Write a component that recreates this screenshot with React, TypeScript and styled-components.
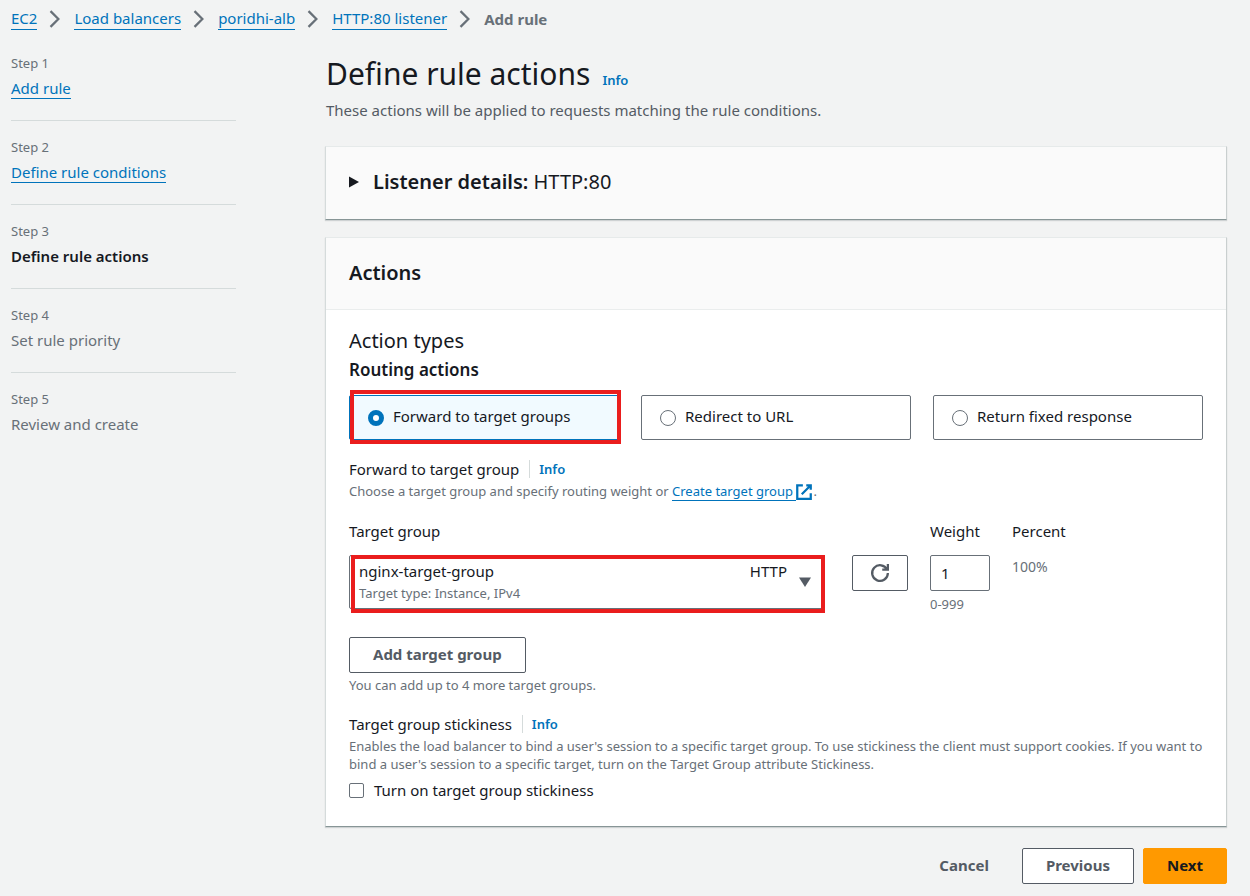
import React from "react";
import styled, { createGlobalStyle, css } from "styled-components";

const color = {
  page: "#f2f3f3",
  text: "#16191f",
  muted: "#687078",
  secondary: "#545b64",
  link: "#0073bb",
  line: "#d5dbdb",
  mark: "#ea1d1d",
};

const GlobalStyle = createGlobalStyle`
  *, *::before, *::after { box-sizing: border-box; }
  body {
    margin: 0;
    background: ${color.page};
    color: ${color.text};
    font-family: "Noto Sans", "Open Sans", sans-serif;
    font-size: 15px;
    line-height: 22px;
  }
  h1, h2, h3, p, ol { margin: 0; padding: 0; font-weight: 400; }
  ol { list-style: none; }
  button, input, select { font: inherit; color: inherit; margin: 0; }
`;

const Page = styled.div`
  padding: 7px 23px 12px 11px;
`;

const Crumbs = styled.ol`
  display: flex;
  align-items: center;
  color: ${color.muted};
`;

const Crumb = styled.li`
  display: flex;
  align-items: center;
  font-weight: ${(p: { $current?: boolean }) => (p.$current ? 700 : 400)};
`;

const Link = styled.a`
  color: ${color.link};
  text-decoration: none;
  border-bottom: 1px solid ${color.link};
`;

const ChevronIcon = styled.svg`
  width: 18px;
  height: 18px;
  margin: 0 10px 0 9px;
  fill: none;
  stroke: ${color.muted};
  stroke-width: 2;
`;

const Columns = styled.div`
  display: grid;
  grid-template-columns: 225px minmax(0, 1fr);
  column-gap: 89px;
  margin-top: 24px;
`;

const Step = styled.li`
  padding-bottom: 21px;
  & + & {
    border-top: 1px solid ${color.line};
    padding-top: 17px;
  }
`;

const StepNumber = styled.div`
  margin-bottom: 5px;
  color: ${color.muted};
  font-size: 13px;
  line-height: 18px;
`;

const StepTitle = styled.div<{ $current?: boolean }>`
  color: ${(p) => (p.$current ? color.text : color.muted)};
  font-weight: ${(p) => (p.$current ? 600 : 400)};
`;

const Title = styled.h1`
  font-size: 30px;
  line-height: 40px;
`;

const Heading = styled.header`
  padding-left: 1px;
`;

const TitleRow = styled.div`
  display: flex;
  align-items: baseline;
  gap: 12px;
`;

const InfoLink = styled.a<{ $divided?: boolean }>`
  color: ${color.link};
  font-size: 13px;
  font-weight: 600;
  line-height: 18px;
  text-decoration: none;
  ${(p) =>
    p.$divided &&
    css`
      border-left: 1px solid ${color.line};
      margin-left: 10px;
      padding-left: 9px;
    `}
`;

const Lead = styled.p`
  margin-top: 5px;
  color: ${color.secondary};
`;

const Panel = styled.section`
  background: #fff;
  border: 1px solid #e6eaea;
  border-left-color: ${color.line};
  border-right-color: #c9cfcf;
  border-bottom-color: #879596;
  box-shadow: 0 1px 1px rgba(0, 28, 36, 0.15);
`;

const ListenerPanel = styled(Panel)`
  margin-top: 25px;
  background: #fafafa;
`;

const Toggle = styled.button`
  display: flex;
  align-items: center;
  width: 100%;
  padding: 21px 23px 24px;
  border: 0;
  background: none;
  font-size: 20px;
  line-height: 27px;
  text-align: left;
  white-space: pre;
`;

const ToggleIcon = styled.svg`
  width: 10px;
  height: 12px;
  margin-right: 14px;
  fill: ${color.text};
`;

const Strong = styled.span`
  font-weight: 600;
`;

const ActionsPanel = styled(Panel)`
  margin-top: 17px;
`;

const PanelHeader = styled.h2`
  padding: 21px 23px 23px;
  background: #fafafa;
  border-bottom: 1px solid #eaeded;
  font-size: 20px;
  font-weight: 600;
  line-height: 27px;
`;

const PanelBody = styled.div`
  padding: 17px 23px 25px;
`;

const GroupTitle = styled.h3`
  font-size: 20px;
  line-height: 28px;
`;

const GroupSubtitle = styled.h3`
  margin-top: 1px;
  font-size: 17px;
  font-weight: 600;
  line-height: 28px;
`;

const marked = css`
  position: relative;
  &::after {
    content: "";
    position: absolute;
    border: 4px solid ${color.mark};
    pointer-events: none;
  }
`;

const Tiles = styled.div`
  display: grid;
  grid-template-columns: repeat(3, 1fr);
  column-gap: 22px;
  margin-top: 11px;
`;

const Tile = styled.label<{ $selected?: boolean }>`
  display: flex;
  align-items: center;
  height: 45px;
  padding: 0 18px;
  border: 1px solid ${(p) => (p.$selected ? color.link : color.muted)};
  border-radius: 2px;
  background: ${(p) => (p.$selected ? "#f1faff" : "#fff")};
  ${(p) =>
    p.$selected &&
    css`
      ${marked}
      &::after {
        inset: -6px -3px -5px 0;
      }
    `}
`;

const TileText = styled.span`
  padding-bottom: 3px;
`;

const Radio = styled.input`
  appearance: none;
  width: 16px;
  height: 16px;
  margin: 0 9px 0 0;
  border: 1px solid ${color.muted};
  border-radius: 50%;
  background: #fff;
  &:checked {
    border: 5px solid ${color.link};
  }
`;

const FieldTitle = styled.div`
  display: flex;
  align-items: center;
  margin-bottom: 2px;
`;

const Hint = styled.p`
  margin-right: -4px;
  color: ${color.muted};
  font-size: 13px;
  line-height: 18px;
`;

const Field = styled.div`
  margin-top: 18px;
`;

const ExternalIcon = styled.svg`
  width: 18px;
  height: 18px;
  margin: -2px 0 -2px -1px;
  vertical-align: -3px;
  fill: none;
  stroke: ${color.link};
  stroke-width: 2;
`;

const TargetRow = styled.div`
  display: flex;
  gap: 22px;
  margin-top: 20px;
`;

const TargetColumn = styled.div`
  flex: 0 1 475px;
  margin-right: 6px;
`;

const Label = styled.label`
  display: block;
  margin-bottom: 13px;
`;

const SelectBox = styled.div`
  ${marked}
  display: grid;
  &::after {
    inset: 0 -1px -4px 2px;
  }
`;

const Select = styled.select`
  grid-area: 1 / 1;
  appearance: none;
  width: 100%;
  height: 54px;
  padding: 0 80px 22px 9px;
  border: 1px solid ${color.muted};
  border-radius: 2px;
  background: #fff;
`;

const SelectDetails = styled.div`
  grid-area: 1 / 1;
  display: grid;
  grid-template-columns: 1fr auto 12px;
  column-gap: 12px;
  align-items: center;
  padding: 5px 13px 6px 10px;
  pointer-events: none;
`;

const Protocol = styled.span`
  grid-area: 1 / 2;
`;

const TargetType = styled.span`
  grid-area: 2 / 1;
  color: ${color.muted};
  font-size: 13px;
  line-height: 20px;
`;

const CaretIcon = styled.svg`
  grid-area: 1 / 3 / 3 / 4;
  width: 12px;
  height: 10px;
  fill: ${color.secondary};
`;

const Button = styled.button<{ $kind?: "primary" | "link" }>`
  height: 36px;
  padding: 0 23px 2px;
  border: 1px solid ${color.secondary};
  border-radius: 2px;
  background: #fff;
  color: ${color.secondary};
  font-weight: 700;
  ${(p) =>
    p.$kind === "primary" &&
    css`
      border-color: #ff9900;
      background: #ff9900;
      color: ${color.text};
    `}
  ${(p) =>
    p.$kind === "link" &&
    css`
      border-color: transparent;
      background: none;
    `}
`;

const RefreshButton = styled(Button)`
  display: flex;
  align-items: center;
  justify-content: center;
  width: 56px;
  margin-top: 35px;
  padding: 0;
`;

const RefreshIcon = styled.svg`
  width: 18px;
  height: 18px;
  fill: none;
  stroke: ${color.secondary};
  stroke-width: 2;
  overflow: visible;
`;

const NumberInput = styled.input`
  display: block;
  width: 60px;
  height: 36px;
  margin-bottom: 4px;
  padding: 0 10px;
  border: 1px solid ${color.muted};
  border-radius: 2px;
  background: #fff;
`;

const WeightColumn = styled.div`
  width: 60px;
`;

const Percent = styled.output`
  color: ${color.muted};
  font-size: 14px;
`;

const AddArea = styled.div`
  margin-top: 24px;
  & > ${Hint} {
    margin-top: 3px;
  }
`;

const StickinessField = styled(Field)`
  margin-top: 19px;
`;

const CheckRow = styled.label`
  display: flex;
  align-items: center;
  margin-top: 6px;
`;

const Checkbox = styled.input`
  appearance: none;
  width: 15px;
  height: 15px;
  margin: 0 10px 0 0;
  border: 1px solid ${color.muted};
  border-radius: 2px;
  background: #fff;
`;

const Footer = styled.footer`
  display: flex;
  justify-content: flex-end;
  gap: 9px;
  margin-top: 21px;
`;

const steps = [
  { title: "Add rule", link: true },
  { title: "Define rule conditions", link: true },
  { title: "Define rule actions", current: true },
  { title: "Set rule priority" },
  { title: "Review and create" },
];

const crumbs = ["EC2", "Load balancers", "poridhi-alb", "HTTP:80 listener"];

const actions = ["Forward to target groups", "Redirect to URL", "Return fixed response"];

export default function App() {
  const [action, setAction] = React.useState(actions[0]);
  return (
    <Page>
      <GlobalStyle />
      <nav aria-label="Breadcrumbs">
        <Crumbs>
          {crumbs.map((name) => (
            <Crumb key={name}>
              <Link href="#">{name}</Link>
              <ChevronIcon viewBox="0 0 16 16" aria-hidden="true">
                <path d="M4 1l7 7-7 7" />
              </ChevronIcon>
            </Crumb>
          ))}
          <Crumb $current aria-current="page">Add rule</Crumb>
        </Crumbs>
      </nav>
      <Columns>
        <nav aria-label="Steps">
          <ol>
            {steps.map((step, i) => (
              <Step key={step.title}>
                <StepNumber>Step {i + 1}</StepNumber>
                <StepTitle $current={step.current}>
                  {step.link ? <Link href="#">{step.title}</Link> : step.title}
                </StepTitle>
              </Step>
            ))}
          </ol>
        </nav>
        <main>
          <Heading>
            <TitleRow>
              <Title>Define rule actions</Title>
              <InfoLink href="#">Info</InfoLink>
            </TitleRow>
            <Lead>These actions will be applied to requests matching the rule conditions.</Lead>
          </Heading>

          <ListenerPanel>
            <Toggle type="button" aria-expanded="false">
              <ToggleIcon viewBox="0 0 10 12" aria-hidden="true">
                <path d="M0 0.5L10 6L0 11.5z" />
              </ToggleIcon>
              <Strong>Listener details: </Strong>HTTP:80
            </Toggle>
          </ListenerPanel>

          <ActionsPanel>
            <PanelHeader>Actions</PanelHeader>
            <PanelBody>
              <GroupTitle>Action types</GroupTitle>
              <GroupSubtitle id="routing">Routing actions</GroupSubtitle>
              <Tiles role="radiogroup" aria-labelledby="routing">
                {actions.map((name) => (
                  <Tile key={name} $selected={name === action}>
                    <Radio
                      type="radio"
                      name="action"
                      checked={name === action}
                      onChange={() => setAction(name)}
                    />
                    <TileText>{name}</TileText>
                  </Tile>
                ))}
              </Tiles>

              <Field>
                <FieldTitle>
                  Forward to target group
                  <InfoLink href="#" $divided>Info</InfoLink>
                </FieldTitle>
                <Hint>
                  Choose a target group and specify routing weight or{" "}
                  <Link href="#">Create target group </Link>
                  <ExternalIcon viewBox="0 0 16 16" aria-hidden="true">
                    <path d="M10 2h4v4M6 10l8-8M14 9v5H2V2h5" />
                  </ExternalIcon>
                  .
                </Hint>
              </Field>

              <TargetRow>
                <TargetColumn>
                  <Label htmlFor="target">Target group</Label>
                  <SelectBox>
                    <Select id="target">
                      <option>nginx-target-group</option>
                    </Select>
                    <SelectDetails>
                      <Protocol>HTTP</Protocol>
                      <TargetType>Target type: Instance, IPv4</TargetType>
                      <CaretIcon viewBox="0 0 12 10" aria-hidden="true">
                        <path d="M0 0.5H12L6 10z" />
                      </CaretIcon>
                    </SelectDetails>
                  </SelectBox>
                </TargetColumn>
                <RefreshButton type="button" aria-label="Refresh target groups">
                  <RefreshIcon viewBox="0 0 16 16" aria-hidden="true">
                    <path d="M10 5h5V0M15 8a7 7 0 1 1-.7-3" />
                  </RefreshIcon>
                </RefreshButton>
                <WeightColumn>
                  <Label htmlFor="weight">Weight</Label>
                  <NumberInput id="weight" type="text" inputMode="numeric" defaultValue="1" />
                  <Hint>0-999</Hint>
                </WeightColumn>
                <div>
                  <Label htmlFor="percent">Percent</Label>
                  <Percent id="percent">100%</Percent>
                </div>
              </TargetRow>

              <AddArea>
                <Button type="button">Add target group</Button>
                <Hint>You can add up to 4 more target groups.</Hint>
              </AddArea>

              <StickinessField>
                <FieldTitle>
                  Target group stickiness
                  <InfoLink href="#" $divided>Info</InfoLink>
                </FieldTitle>
                <Hint>
                  Enables the load balancer to bind a user's session to a specific target group. To use
                  stickiness the client must support cookies. If you want to bind a user's session to a
                  specific target, turn on the Target Group attribute Stickiness.
                </Hint>
                <CheckRow>
                  <Checkbox type="checkbox" />
                  Turn on target group stickiness
                </CheckRow>
              </StickinessField>
            </PanelBody>
          </ActionsPanel>

          <Footer>
            <Button type="button" $kind="link">Cancel</Button>
            <Button type="button">Previous</Button>
            <Button type="button" $kind="primary">Next</Button>
          </Footer>
        </main>
      </Columns>
    </Page>
  );
}
